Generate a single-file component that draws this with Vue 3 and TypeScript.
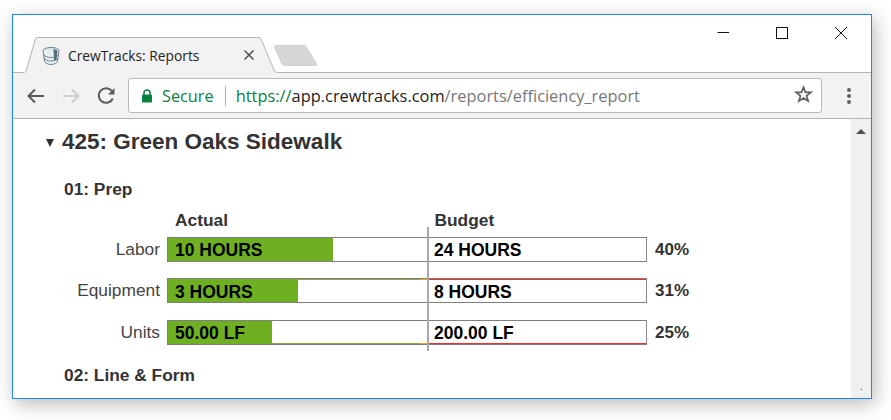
<script setup lang="ts">
interface Row { label: string; actual: string; budget: string; fill: number; pct: string; cls: string }
const rows: Row[] = [
  { label: 'Labor', actual: '10 HOURS', budget: '24 HOURS', fill: 165, pct: '40%', cls: 'r1' },
  { label: 'Equipment', actual: '3 HOURS', budget: '8 HOURS', fill: 130, pct: '31%', cls: 'r2' },
  { label: 'Units', actual: '50.00 LF', budget: '200.00 LF', fill: 104, pct: '25%', cls: 'r3' },
]
</script>

<template>
  <div class="stage">
    <div class="window">
      <div class="titlebar">
        <div class="tab">
          <svg class="tabshape" width="258" height="36" viewBox="0 0 258 36">
            <path d="M0 36V35.500H3C5 35.500 6 34.500 6.500 33L15 3C15.500 1.500 16.500 .5 18 .5H238C240 .5 241 1.500 241.500 3L254 33C254.500 34.500 256 35.500 258 35.500V36Z" fill="#f2f2f2"/>
            <path d="M0 35.500H3C5 35.500 6 34.500 6.500 33L15 3C15.500 1.500 16.500 .5 18 .5H238C240 .5 241 1.500 241.500 3L254 33C254.500 34.500 256 35.500 258 35.500" fill="none" stroke="#b4b4b4"/>
          </svg>
          <svg class="favicon" width="18" height="20" viewBox="0 0 18 20">
            <ellipse cx="9" cy="4.500" rx="8" ry="3" fill="#dfe6ea" stroke="#6d8391"/>
            <path d="M1 4.500L2.500 15C3 17 5.500 18.500 9 18.500S15 17 15.500 15L17 4.500" fill="#e8edf0" stroke="#6d8391"/>
            <path d="M1.500 8C2 10 5 11.500 9 11.500S16 10 16.500 8M2 11.500C2.500 13.500 5 15 9 15S15.500 13.500 16 11.500" fill="none" stroke="#6d8391"/>
            <path d="M11.500 3L15.500 4.500L14.500 13.500L12 14.500Z" fill="#536d7c"/>
          </svg>
          <span class="tabtitle">CrewTracks: Reports</span>
          <svg class="tabclose" width="10" height="10" viewBox="0 0 10 10"><path d="M.5 .5L9.500 9.500M9.500 .5L.5 9.500" stroke="#505050" stroke-width="1.500"/></svg>
        </div>
        <svg class="newtab" width="44" height="22" viewBox="0 0 44 22"><path d="M1.500 .5H30C31 .5 31.500 1 32 1.500L42.500 18.500C43 19.500 42.500 20.500 41 20.500H10C9 20.500 8.500 20 8 19L.5 2C.3 1 .7 .5 1.500 .5Z" fill="#d6d6d6" stroke="#d0d0d0"/></svg>
        <div class="winbtns">
          <svg width="14" height="14" viewBox="0 0 14 14"><path d="M1.500 6.500H13" stroke="#111"/></svg>
          <svg width="14" height="14" viewBox="0 0 14 14"><rect x="1.500" y="1.500" width="11" height="11" fill="none" stroke="#111"/></svg>
          <svg width="14" height="14" viewBox="0 0 14 14"><path d="M1 1L13 13M13 1L1 13" stroke="#111"/></svg>
        </div>
      </div>

      <div class="toolbar">
        <svg class="nav" width="20" height="18" viewBox="0 0 20 18"><path d="M19 9H4M10 2.500L3.500 9L10 15.500" fill="none" stroke="#5a5a5a" stroke-width="2"/></svg>
        <svg class="nav" width="20" height="18" viewBox="0 0 20 18"><path d="M3 9H18M12 2.500L18.500 9L12 15.500" fill="none" stroke="#d0d0d0" stroke-width="2"/></svg>
        <svg class="nav" width="20" height="18" viewBox="0 0 20 18"><path d="M15.800 11.500A7.300 7.300 0 1 1 15 4.200" fill="none" stroke="#5a5a5a" stroke-width="2"/><path d="M17.500 1V7.500H11Z" fill="#5a5a5a"/></svg>
        <div class="omnibox">
          <svg class="lock" width="12" height="14" viewBox="0 0 12 14"><path d="M3 6V4A3 3 0 0 1 9 4V6" fill="none" stroke="#0b8043" stroke-width="1.500"/><rect x="1" y="5.500" width="10" height="8" rx="1" fill="#0b8043"/></svg>
          <span class="secure">Secure</span>
          <span class="sep"></span>
          <span class="url"><span class="scheme">https://</span><span class="host">app.crewtracks.com</span><span class="path">/reports/efficiency_report</span></span>
          <svg class="star" width="19" height="19" viewBox="0 0 18 18"><path d="M9 2.200L10.900 7H16L11.900 10.200L13.400 15.300L9 12.400L4.600 15.300L6.100 10.200L2 7H7.100Z" fill="none" stroke="#5f5f5f" stroke-width="1.600"/></svg>
        </div>
        <div class="menu"><i></i><i></i><i></i></div>
      </div>

      <div class="body">
        <div class="content">
          <h1><span class="caret"></span>425: Green Oaks Sidewalk</h1>
          <h2>01: Prep</h2>
          <div class="report">
            <div class="heads"><span class="h-actual">Actual</span><span class="h-budget">Budget</span></div>
            <div v-for="r in rows" :key="r.label" class="row" :class="r.cls">
              <span class="label">{{ r.label }}</span>
              <div class="bar">
                <div class="fill" :style="{ width: r.fill + 'px' }"></div>
                <span class="v-actual">{{ r.actual }}</span>
                <span class="v-budget">{{ r.budget }}</span>
              </div>
              <span class="pct">{{ r.pct }}</span>
            </div>
            <div class="divider"></div>
          </div>
          <h2 class="second">02: Line &amp; Form</h2>
        </div>
        <div class="scrollbar"><span class="up"></span><span class="dot"></span></div>
      </div>
    </div>
  </div>
</template>

<style>
html, body { margin: 0; background: #fff; }
</style>

<style scoped>
.stage { width: 891px; height: 420px; padding: 14px 0 0 12px; box-sizing: border-box; overflow: hidden; font-family: "Liberation Sans", Arial, sans-serif; }
.window { width: 860px; height: 385px; box-sizing: border-box; border: 1px solid #1e88e5; background: #fff; box-shadow: 3px 5px 18px rgba(0,0,0,.28); display: flex; flex-direction: column; overflow: hidden; }
.titlebar { height: 58px; box-sizing: border-box; flex: none; border-bottom: 1px solid #b4b4b4; display: flex; align-items: flex-end; padding-left: 7px; position: relative; }
.tab { width: 254px; height: 36px; flex: none; margin-bottom: -1px; position: relative; display: flex; align-items: center; padding: 0 0 0 22px; box-sizing: border-box; }
.tabshape { position: absolute; left: 0; top: 0; overflow: visible; }
.favicon { position: relative; flex: none; margin-top: 2px; }
.tabtitle { position: relative; font-family: "Open Sans", sans-serif; font-size: 13.8px; color: #222; margin-left: 8px; width: 176px; margin-top: 1px; white-space: nowrap; }
.tabclose { position: relative; flex: none; }
.newtab { flex: none; margin: 0 0 5px 0; }
.winbtns { position: absolute; right: 23px; top: 11px; display: flex; gap: 45px; }
.toolbar { height: 46px; box-sizing: border-box; flex: none; background: #f2f2f2; border-bottom: 1px solid #b4b4b4; display: flex; align-items: center; padding-left: 12px; }
.nav { flex: none; margin-right: 15px; }
.nav:nth-child(3) { margin-right: 11px; margin-left: 2px; }
.omnibox { width: 694px; height: 35px; box-sizing: border-box; flex: none; background: #fff; border: 1px solid #b9b9b9; border-radius: 3px; display: flex; align-items: center; padding-left: 12px; position: relative; }
.lock { flex: none; }
.secure { font-family: "Open Sans", sans-serif; font-size: 16.3px; color: #0b8043; margin-left: 9px; }
.sep { width: 1px; height: 20px; background: #b0b0b0; margin: 0 10px 0 11px; }
.url { font-family: "Open Sans", sans-serif; font-size: 16.4px; white-space: nowrap; }
.scheme { color: #0b8043; }
.host { color: #222; }
.path { color: #777; }
.star { position: absolute; right: 8px; top: 6px; }
.menu { display: flex; flex-direction: column; gap: 2px; margin-left: 25px; }
.menu i { width: 4px; height: 4px; border-radius: 50%; background: #606060; display: block; }
.body { flex: 1; min-height: 0; display: flex; }
.content { flex: 1; min-width: 0; padding: 10px 0 0 33px; color: #333; overflow: hidden; }
h1 { margin: 0; font-size: 22.5px; line-height: 25px; font-weight: 700; display: flex; align-items: center; }
.caret { width: 0; height: 0; border-left: 4px solid transparent; border-right: 4px solid transparent; border-top: 8px solid #333; margin-right: 8px; margin-top: 3px; }
h2 { margin: 25px 0 0 18px; font-size: 17.33px; line-height: 20px; font-weight: 700; }
.report { position: relative; margin-top: 12px; }
.heads { height: 24px; position: relative; font-size: 17.33px; font-weight: 700; line-height: 18px; display: flex; padding-left: 129px; }
.h-actual { width: 259.500px; }
.row { display: flex; align-items: center; height: 25px; }
.heads + .row { margin-top: 2px; }
.row + .row { margin-top: 16px; }
.row.r3 { margin-top: 17px; }
.label { width: 114px; margin-right: 7px; text-align: right; font-size: 17.33px; color: #444; flex: none; }
.bar { width: 480px; height: 25px; box-sizing: border-box; flex: none; border: 1px solid #7f7f7f; border-right-color: #888; padding-top: 2px; position: relative; display: flex; align-items: center; font-size: 17.5px; font-weight: 700; color: #000; background: #fff; }
.r2 .bar { padding-top: 4px; }
.fill { position: absolute; left: 0; top: 0; bottom: 0; background: #6fb022; }
.v-actual { position: relative; margin-left: 7px; width: 259px; flex: none; }
.v-budget { position: relative; white-space: nowrap; }
.r2 .bar::before { content: ""; position: absolute; left: 130px; right: 0; top: 0; height: 1px; background: linear-gradient(to right, #8fa63c 122px, #eda521 122px, #eda521 130px, #f03030 130px); }
.r3 .bar::before { content: ""; position: absolute; left: 104px; right: 0; bottom: 0; height: 1px; background: linear-gradient(to right, #8fa63c 148px, #eda521 148px, #eda521 156px, #f03030 156px); }
.pct { font-size: 17px; font-weight: 700; color: #333; margin-left: 8px; }
.divider { position: absolute; left: 381px; top: 16px; width: 2px; height: 124px; background: #a8a8a8; }
.second { margin-top: 20px; }
.scrollbar { width: 20px; flex: none; background: #f0f0f0; position: relative; }
.up { position: absolute; left: 5px; top: 10px; width: 0; height: 0; border-left: 5px solid transparent; border-right: 5px solid transparent; border-bottom: 5px solid #505050; }
.dot { position: absolute; left: 10px; bottom: 8px; width: 1px; height: 1px; background: #444; }
</style>
